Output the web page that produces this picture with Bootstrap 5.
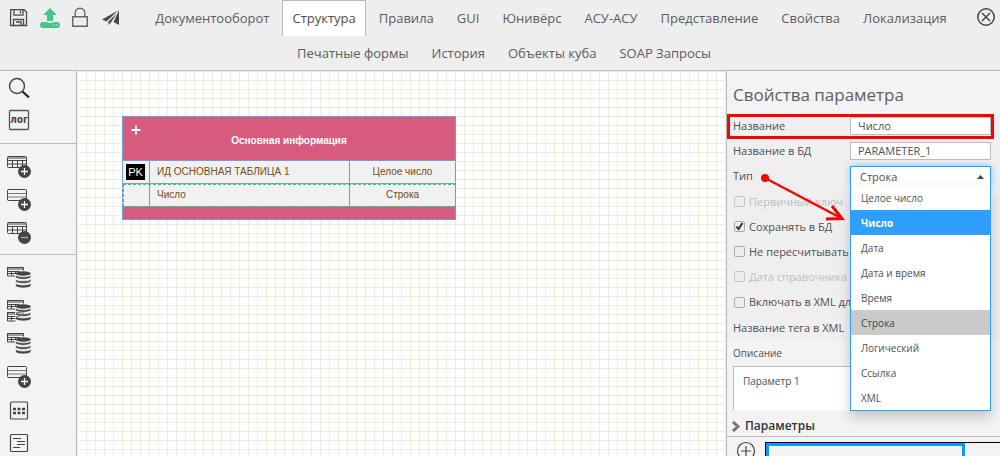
<!DOCTYPE html>
<html lang="ru">
<head>
<meta charset="utf-8">
<meta name="viewport" content="width=device-width, initial-scale=1">
<title>Структура</title>
<link rel="stylesheet" href="https://cdn.jsdelivr.net/npm/bootstrap@5.3.0/dist/css/bootstrap.min.css">
<style>
body{font-family:"Open Sans","Noto Sans",sans-serif;font-size:11px;line-height:16px;color:#505050;background:#eee}
.topbar{background:#eee;border-bottom:1px solid #bbb;height:71px}
.icon-btn{border:0;background:none;padding:0;line-height:0;color:#4a4a4a}
.tools{width:126px;padding:7px 0 0 8px;gap:10px}
.tabs-row{gap:3px}
.tab-link{display:block;height:36px;padding:8px 9px 0;border:1px solid transparent;border-bottom:0;font-size:13px;line-height:18px;color:#5c5c5c;text-decoration:none;white-space:nowrap}
.tab-link.current{background:#fff;border-color:#bbb;color:#4d4d4d}
.row-two{padding-left:8px;margin-top:-1px}
.rail{width:77px;background:#f3f3f3;border-right:1px solid #bbb}
.rail .group{border-bottom:1px solid #bbb;padding:6px 0 5px 7px}
.rail .group:first-child{padding-top:0;padding-bottom:6px}
.rail .group:last-child{border:0}
.rail .icon-btn{height:33px;display:flex;align-items:center}
.board{background-color:#fff;background-image:linear-gradient(#e8efdc 1px,transparent 1px),linear-gradient(90deg,#e8efdc 1px,transparent 1px);background-size:9px 9px}
.entity{left:45px;top:45px;width:333px;table-layout:fixed;border-collapse:collapse;font-family:"Liberation Sans",Arial,sans-serif;font-size:10px;line-height:14px;color:#7a4a10;border:1px solid #6f9fd4;background:#f1f1f1}
.entity th,.entity td{border:1px solid #6f9fd4;padding:0 7px}
.entity .head{position:relative;height:44px;padding-top:4px;background:#d65b7f;color:#fff;text-align:center}
.entity .head button{position:absolute;left:8px;top:8px}
.entity .line td{height:23px}
.entity .picked{outline:1px dashed #1fdc3c;outline-offset:-1px}
.entity .foot{height:13px;background:#d65b7f}
.pk{display:block;width:19px;height:16px;margin-left:-4px;background:#000;color:#fff;font-size:11px;line-height:17px;text-align:center}
.props{width:274px;background:#f3f3f3;border-left:1px solid #bbb}
.props h1{font-size:17px;line-height:24px;padding:12px 0 0 6px;margin:0 0 6px;font-weight:400;color:#5f5f5f}
.fields{background:#efefef}
.field{height:25px;padding:0 9px 0 6px}
.field.tall{height:26px}
.field>label{white-space:nowrap}
.field .val{width:141px;height:18px;border:1px solid #bbb;border-radius:0;padding:0 7px;font-size:11px;line-height:16px;color:#505050;background:#fff}
.check input{appearance:none;width:11px;height:11px;margin:0 4px 0 1px;border:1px solid #aaa;border-radius:2px;background:#eee}
.check input:checked{background:#eee url("data:image/svg+xml,%3Csvg xmlns='http://www.w3.org/2000/svg' viewBox='0 0 9 9'%3E%3Cpath d='M1.5 4.5l2 2.5 4-6' fill='none' stroke='%23333' stroke-width='2'/%3E%3C/svg%3E")}
.check.off{color:#bdbdbd}
.check.off input{border-color:#c4c4c4}
.picker{width:141px;height:20px}
.picker select{display:block;appearance:none;width:100%;height:20px;border:1px solid #2f9fff;border-bottom:0;border-radius:0;padding:0 9px;font-size:11px;line-height:19px;color:#505050;background:#fff;box-shadow:0 0 7px #7fc1f7}
.picker svg{right:7px;top:9px}
.choices{left:0;right:0;top:19px;z-index:3;background:#fff;border:1px solid #2f9fff;border-top:0;box-shadow:0 6px 12px rgba(0,0,0,.2)}
.choices button{display:block;width:100%;height:25px;border:0;background:none;padding:0 10px;text-align:left;font-size:10px;color:#505050}
.choices .hot{background:#2f9fff;color:#fff;font-weight:700}
.choices .now{background:#cacaca;color:#444}
.callout{left:0;right:6px;top:43px;height:25px;border:3px solid #f00;z-index:4}
.pointer{left:30px;top:97px;z-index:5}
.about{padding:0 9px 0 6px;font-size:10px}
.about label{height:26px;padding-top:5px}
.about textarea{height:44px;border:1px solid #bbb;border-bottom:0;padding:6px 9px;font-size:10px;line-height:16px;color:#505050;resize:none;border-radius:0}
.fold{height:27px;border:0;border-bottom:1px solid #bbb;background:none;padding:6px 0 0 4px;font-size:12px;font-weight:600;color:#333;gap:4px}
.strip{height:60px;margin:5px 0 0 38px;border:1px solid #000;border-right:0}
.strip div{width:85%;height:60px;border:3px solid #0d99ff}
.add{left:9px;top:-1px}
</style>
<script src="https://cdn.jsdelivr.net/npm/bootstrap@5.3.0/dist/js/bootstrap.bundle.min.js"></script>
</head>
<body class="vh-100 overflow-hidden d-flex flex-column">
<svg width="0" height="0" class="position-absolute" aria-hidden="true">
<defs>
<g id="grid-table" fill="none" stroke="#444"><rect x=".5" y="1.500" width="19" height="11" rx="1"/><path d="M.5 3h19M.5 5.500h19M.5 9h19M5.500 5v7M10.500 5v7M15.500 5v7"/></g>
<g id="row-table" fill="none" stroke="#444"><rect x=".5" y="1.500" width="19" height="11" rx="1"/><path d="M.5 5.500h19M.5 9h19" stroke="#777"/></g>
<g id="small-table" fill="none" stroke="#444"><path d="M.5 1.500h16v3M.5 1v9h8M.5 3h16M.5 5.500h12M.5 7.500h8M4.500 5v4.500M8.500 5v3"/></g>
<g id="badge-plus"><circle cx="17.500" cy="16.500" r="6.500" fill="#444"/><path d="M17.500 13v7M14 16.500h7" stroke="#fff" stroke-width="1.300"/></g>
<g id="disks"><ellipse cx="16.200" cy="7.500" rx="7.700" ry="2.200" fill="#444"/><path d="M8.500 8.800c1.500 2.600 14 2.600 15.500 0v2.300c-1.500 3-14 3-15.500 0zM8.500 12.900c1.500 2.600 14 2.600 15.500 0v2.300c-1.500 3-14 3-15.500 0zM8.500 17c1.500 2.600 14 2.600 15.500 0v2.800c-1.500 3-14 3-15.500 0z" fill="#444" stroke="#f3f3f3" stroke-width=".8"/></g>
</defs>
</svg>

<header class="topbar flex-shrink-0">
  <div class="d-flex">
    <div class="tools d-flex align-items-start flex-shrink-0">
      <button class="icon-btn" aria-label="Сохранить"><svg width="21" height="21" fill="none" stroke="#4a4a4a" stroke-width="1.300"><path d="M2.700 2.700H16L18.500 5v13.500h-16zM6 2.700v5.500h9V2.700M12.500 3.500v3M5.500 18.500V12.500h10v6M8 15h5v3"/></svg></button>
      <button class="icon-btn" aria-label="Загрузить"><svg width="22" height="22" fill="#44c486"><path d="M11 1l7 7h-4v6H8V8H4z"/><path d="M4 15h3q4 2 8 0h3a3 3 0 010 6H4a3 3 0 010-6z"/><circle cx="15" cy="18" r=".7" fill="#eee"/><circle cx="18" cy="18" r=".7" fill="#eee"/></svg></button>
      <button class="icon-btn" aria-label="Заблокировать"><svg width="19" height="22" fill="none" stroke="#666" stroke-width="1.400"><path d="M1.700 9.700h14.600v9.500H1.700zM4.200 9.500V6a4.800 4.800 0 019.600 0v3.500"/></svg></button>
      <button class="icon-btn" aria-label="Отправить"><svg width="20" height="22" fill="#4a4a4a"><path d="M19 3v15l-5.500-3zM18 3.500L2 12.500l4.500 2zM16.500 6.500l-8 8V18l2.500-2.500z"/></svg></button>
    </div>
    <nav class="tabs-row d-flex flex-fill justify-content-center">
      <a class="tab-link" href="#">Документооборот</a>
      <a class="tab-link current" href="#">Структура</a>
      <a class="tab-link" href="#">Правила</a>
      <a class="tab-link" href="#">GUI</a>
      <a class="tab-link" href="#">Юнивёрс</a>
      <a class="tab-link" href="#">АСУ-АСУ</a>
      <a class="tab-link" href="#">Представление</a>
      <a class="tab-link" href="#">Свойства</a>
      <a class="tab-link" href="#">Локализация</a>
    </nav>
    <button class="icon-btn align-self-start pt-2 pe-1" aria-label="Закрыть"><svg width="20" height="19" fill="none" stroke="#444" stroke-width="1.500"><circle cx="10" cy="9" r="8.200"/><path d="M6 5l8 8M14 5l-8 8"/></svg></button>
  </div>
  <nav class="tabs-row row-two d-flex justify-content-center">
    <a class="tab-link" href="#">Печатные формы</a>
    <a class="tab-link" href="#">История</a>
    <a class="tab-link" href="#">Объекты куба</a>
    <a class="tab-link" href="#">SOAP Запросы</a>
  </nav>
</header>

<main class="d-flex flex-fill overflow-hidden">
  <aside class="rail flex-shrink-0">
    <div class="group">
      <button class="icon-btn" aria-label="Поиск"><svg width="25" height="24" fill="none" stroke="#444"><circle cx="10" cy="10" r="7.500" stroke-width="1.400"/><path d="M15.500 15.500l6.500 6" stroke="#222" stroke-width="2.200"/></svg></button>
      <button class="icon-btn" aria-label="Лог"><svg width="25" height="24"><rect x="2.500" y="1.500" width="19" height="19" rx="1" fill="none" stroke="#555" stroke-width="1.300"/><text x="12" y="14" text-anchor="middle" font-family="Liberation Sans Narrow, DejaVu Sans Condensed, Open Sans, sans-serif" font-size="10" font-weight="700" fill="#444">лог</text></svg></button>
    </div>
    <div class="group">
      <button class="icon-btn" aria-label="Добавить таблицу"><svg width="25" height="24"><use href="#grid-table"/><use href="#badge-plus"/></svg></button>
      <button class="icon-btn" aria-label="Добавить строку"><svg width="25" height="24"><use href="#row-table"/><use href="#badge-plus"/></svg></button>
      <button class="icon-btn" aria-label="Удалить таблицу"><svg width="25" height="24"><use href="#grid-table"/><circle cx="17.500" cy="16.500" r="6.500" fill="#444"/><path d="M14 16.500h7" stroke="#aaa" stroke-width="1.300"/></svg></button>
    </div>
    <div class="group">
      <button class="icon-btn" aria-label="Таблица в базе"><svg width="25" height="24"><use href="#small-table"/><use href="#disks"/></svg></button>
      <button class="icon-btn" aria-label="Таблицы в базе"><svg width="25" height="24"><use href="#small-table"/><use href="#small-table" y="12"/><use href="#disks"/></svg></button>
      <button class="icon-btn" aria-label="Обновить базу"><svg width="25" height="24"><use href="#small-table"/><use href="#disks"/></svg></button>
      <button class="icon-btn" aria-label="Новая строка"><svg width="25" height="24"><use href="#row-table"/><use href="#badge-plus"/></svg></button>
      <button class="icon-btn" aria-label="Сетка"><svg width="25" height="24"><rect x="3.500" y="4" width="17" height="17" rx="1" fill="none" stroke="#444" stroke-width="1.200"/><path d="M6 11h12M6 15h12" stroke="#444" stroke-width="2.600" stroke-dasharray="3 1.500"/></svg></button>
      <button class="icon-btn" aria-label="Список"><svg width="25" height="24"><g fill="none" stroke="#444" stroke-width="1.200"><rect x="3.500" y="3.500" width="17" height="17" rx="1"/><path d="M6 7.500h8M10 10.500h8M10 13.500h8M6 16.500h7"/></g></svg></button>
    </div>
  </aside>

  <section class="board flex-fill position-relative">
    <table class="entity position-absolute">
      <colgroup><col style="width:27px"><col style="width:200px"><col style="width:106px"></colgroup>
      <thead><tr><th class="head" colspan="3"><button class="icon-btn" aria-label="Добавить"><svg width="10" height="10"><path d="M5 .5v9M.5 5h9" stroke="#fff" stroke-width="1.800"/></svg></button>Основная информация</th></tr></thead>
      <tbody>
        <tr class="line"><td><span class="pk">PK</span></td><td>ИД ОСНОВНАЯ ТАБЛИЦА 1</td><td class="text-center">Целое число</td></tr>
        <tr class="line picked"><td></td><td>Число</td><td class="text-center">Строка</td></tr>
      </tbody>
      <tfoot><tr><td class="foot" colspan="3"></td></tr></tfoot>
    </table>
  </section>

  <aside class="props flex-shrink-0 position-relative">
    <h1>Свойства параметра</h1>
    <div class="fields">
      <div class="field d-flex align-items-center justify-content-between"><label for="f-name">Название</label><input class="val" id="f-name" value="Число"></div>
      <div class="field d-flex align-items-center justify-content-between"><label for="f-db">Название в БД</label><input class="val" id="f-db" value="PARAMETER_1"></div>
      <div class="field tall d-flex align-items-center justify-content-between"><label for="f-type">Тип</label>
        <div class="picker position-relative">
          <select id="f-type"><option>Строка</option></select>
          <svg class="position-absolute" width="7" height="4"><path d="M0 4L3.500 0 7 4z" fill="#444"/></svg>
          <div class="choices position-absolute" role="listbox">
            <button>Целое число</button><button class="hot">Число</button><button>Дата</button><button>Дата и время</button><button>Время</button><button class="now">Строка</button><button>Логический</button><button>Ссылка</button><button>XML</button>
          </div>
        </div>
      </div>
      <div class="field check off d-flex align-items-center"><input type="checkbox" id="c1" disabled><label for="c1">Первичный ключ</label></div>
      <div class="field check d-flex align-items-center"><input type="checkbox" id="c2" checked><label for="c2">Сохранять в БД</label></div>
      <div class="field check d-flex align-items-center"><input type="checkbox" id="c3"><label for="c3">Не пересчитывать</label></div>
      <div class="field check off d-flex align-items-center"><input type="checkbox" id="c4" disabled><label for="c4">Дата справочника</label></div>
      <div class="field tall check d-flex align-items-center"><input type="checkbox" id="c5"><label for="c5">Включать в XML для</label></div>
      <div class="field d-flex align-items-center justify-content-between"><label for="f-tag">Название тега в XML</label><input class="val" id="f-tag"></div>
    </div>
    <div class="about"><label for="f-about" class="d-block">Описание</label><textarea id="f-about" class="d-block w-100">Параметр 1</textarea></div>
    <button class="fold d-flex align-items-center w-100"><svg width="10" height="11"><path d="M2 1l5 4.500L2 10" fill="none" stroke="#777" stroke-width="3"/></svg>Параметры</button>
    <div class="position-relative">
      <button class="icon-btn add position-absolute" aria-label="Добавить параметр"><svg width="20" height="20" fill="none" stroke="#444" stroke-width="1.200"><circle cx="10" cy="10" r="8.500"/><path d="M10 5v10M5 10h10"/></svg></button>
      <div class="strip"><div></div></div>
    </div>
    <div class="callout position-absolute"></div>
    <svg class="pointer position-absolute" width="92" height="60"><circle cx="8" cy="10" r="4" fill="#f00"/><path d="M8 10l74 39" stroke="#f00" stroke-width="2.500"/><path d="M75 38L85 50.500 69 51" fill="none" stroke="#f00" stroke-width="3"/></svg>
  </aside>
</main>
</body>
</html>
